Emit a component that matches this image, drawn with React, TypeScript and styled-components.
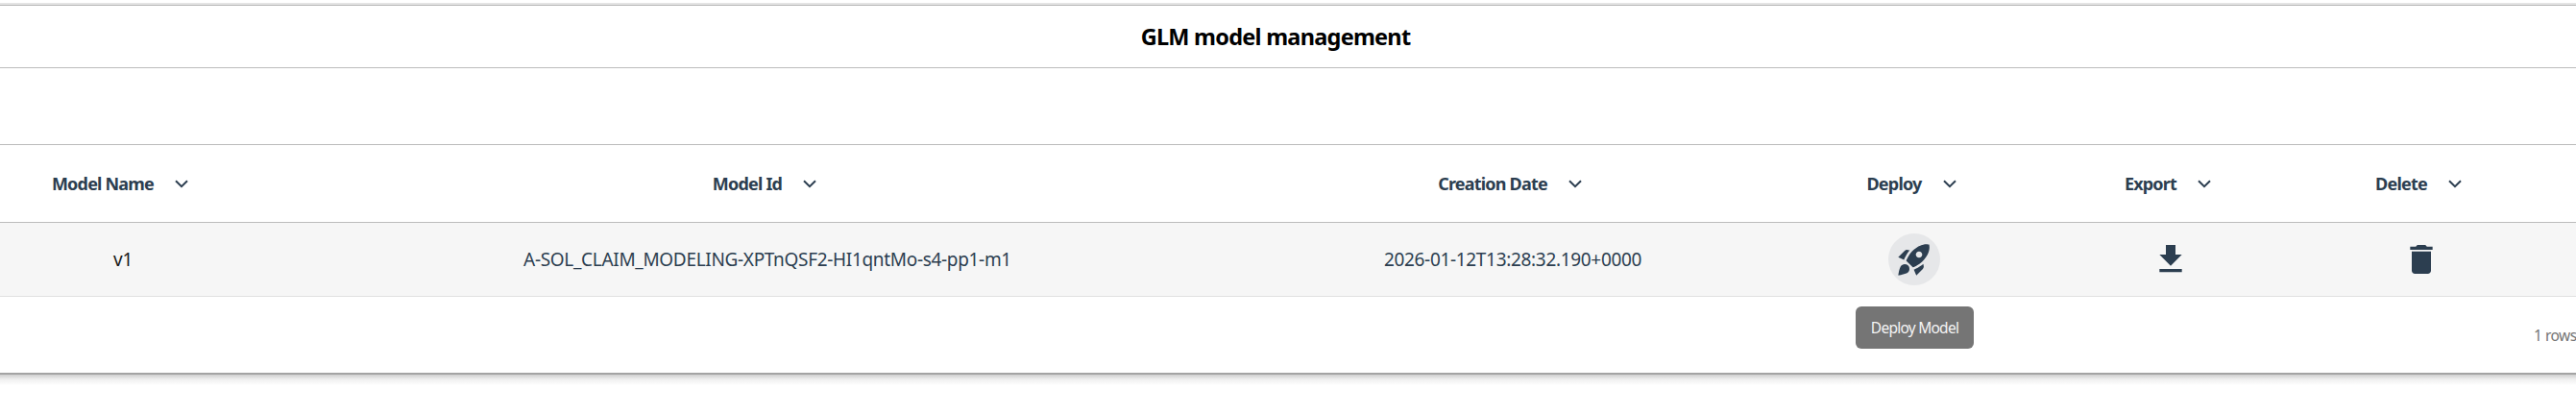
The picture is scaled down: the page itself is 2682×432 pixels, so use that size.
import styled, { createGlobalStyle } from "styled-components";
import { MdDelete, MdFileDownload, MdRocketLaunch } from "react-icons/md";

const INK = "#2c3e50";
const COLUMNS = "256px 1086px 466px 370px 164px 358px";

const GlobalStyle = createGlobalStyle`
  * {
    box-sizing: border-box;
  }
  html {
    overflow: hidden;
  }
  html, body {
    margin: 0;
    padding: 0;
    background: #fff;
    font-family: "Noto Sans", "Open Sans", sans-serif;
  }
`;

const Panel = styled.section`
  position: relative;
  width: 2682px;
  margin-top: 3px;
  border-top: 2px solid #e4e4e4;
  background: #fff;
`;

const TitleBar = styled.header`
  height: 66px;
  display: flex;
  align-items: center;
  justify-content: center;
  padding: 0 26px 1px 0;
  border-top: 1px solid #b8b8b8;
  border-bottom: 1px solid #bcbcbc;
`;

const Title = styled.h1`
  margin: 0;
  font-size: 23.5px;
  font-weight: 700;
  letter-spacing: -0.75px;
  color: #000;
`;

const Spacer = styled.div`
  height: 79px;
`;

const HeadRow = styled.div`
  display: grid;
  grid-template-columns: ${COLUMNS};
  height: 82px;
  border-top: 1px solid #bcbcbc;
  border-bottom: 1px solid #bcbcbc;
`;

const HeadCell = styled.div`
  display: flex;
  align-items: center;
  justify-content: center;
  gap: 22px;
  padding-right: 6px;
  font-size: 18px;
  font-weight: 700;
  letter-spacing: -0.8px;
  color: ${INK};
`;

const BodyRow = styled.div`
  display: grid;
  grid-template-columns: ${COLUMNS};
  height: 77px;
  background: #f6f6f6;
  border-bottom: 1px solid #e0e0e0;
`;

const BodyCell = styled.div<{ $dark?: boolean }>`
  display: flex;
  align-items: center;
  justify-content: center;
  font-size: 19px;
  letter-spacing: -0.32px;
  color: ${(p) => (p.$dark ? "#1a1a1a" : INK)};
`;

const IconButton = styled.button<{ $active?: boolean }>`
  width: 54px;
  height: 54px;
  padding: 0;
  display: flex;
  align-items: center;
  justify-content: center;
  border: 0;
  border-radius: 50%;
  color: ${INK};
  background: ${(p) => (p.$active ? "#e6e7e9" : "transparent")};
`;

const Footer = styled.footer`
  position: relative;
  height: 81px;
  display: flex;
  align-items: center;
  padding-left: 2638px;
  border-bottom: 2px solid #a4a4a4;
`;

const BottomShade = styled.div`
  height: 11px;
  background: linear-gradient(#cfcfcf, #f0f0f0 45%, #fff);
`;

const RowCount = styled.span`
  font-size: 15.5px;
  letter-spacing: -0.5px;
  white-space: nowrap;
  color: #757575;
`;

const Tooltip = styled.div`
  position: absolute;
  left: 1932px;
  top: 10px;
  width: 123px;
  height: 44px;
  display: flex;
  align-items: center;
  justify-content: center;
  border-radius: 6px;
  background: #757575;
  color: #f4f4f4;
  font-size: 15.5px;
  letter-spacing: -0.75px;
`;

const Chevron = () => (
  <svg width="14" height="9" viewBox="0 0 14 9" fill="none">
    <path d="M1 1.2 7 7.2 13 1.2" stroke={INK} strokeWidth="2" />
  </svg>
);

const headers = ["Model Name", "Model Id", "Creation Date", "Deploy", "Export", "Delete"];

const App = () => {
  return (
    <>
      <GlobalStyle />
      <Panel>
        <TitleBar>
          <Title>GLM model management</Title>
        </TitleBar>
        <Spacer />
        <HeadRow>
          {headers.map((h) => (
            <HeadCell key={h}>
              {h}
              <Chevron />
            </HeadCell>
          ))}
        </HeadRow>
        <BodyRow>
          <BodyCell $dark>v1</BodyCell>
          <BodyCell>A-SOL_CLAIM_MODELING-XPTnQSF2-HI1qntMo-s4-pp1-m1</BodyCell>
          <BodyCell>2026-01-12T13:28:32.190+0000</BodyCell>
          <BodyCell>
            <IconButton $active>
              <MdRocketLaunch size={40} />
            </IconButton>
          </BodyCell>
          <BodyCell>
            <IconButton>
              <MdFileDownload size={40} />
            </IconButton>
          </BodyCell>
          <BodyCell>
            <IconButton>
              <MdDelete size={40} />
            </IconButton>
          </BodyCell>
        </BodyRow>
        <Footer>
          <Tooltip>Deploy Model</Tooltip>
          <RowCount>1 rows</RowCount>
        </Footer>
        <BottomShade />
      </Panel>
    </>
  );
};

export default App;
